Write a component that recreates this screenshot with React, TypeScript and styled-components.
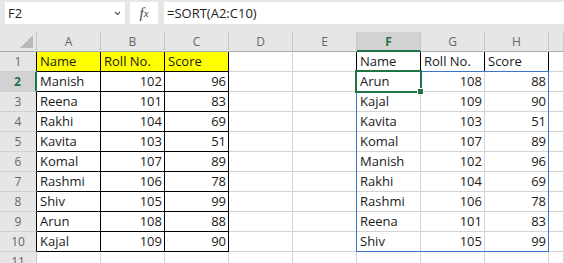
import React from "react";
import styled, { createGlobalStyle } from "styled-components";

const Global = createGlobalStyle`
  html, body { margin: 0; padding: 0; background: #ffffff; overflow: hidden; }
  body { font-family: "Open Sans", "Liberation Sans", sans-serif; }
`;

const GREEN = "#217346";
const BLUE = "#3b74c9";
const GRID = "#d4d4d4";
const HEAD_BG = "#e6e6e6";

const Page = styled.div`
  width: 564px;
  height: 263px;
  overflow: hidden;
  background: #fff;
`;

const Toolbar = styled.div`
  display: flex;
  align-items: flex-start;
  gap: 5px;
  height: 32px;
  box-sizing: border-box;
  padding: 2px 0 0 5px;
  background: ${HEAD_BG};
`;

const NameBox = styled.div`
  width: 120px;
  height: 22px;
  background: #fff;
  display: flex;
  align-items: center;
  justify-content: space-between;
  box-sizing: border-box;
  padding: 0 4px 0 3px;
  font-size: 13px;
  color: #222;
`;

const FxBox = styled.div`
  width: 28px;
  height: 22px;
  background: #fff;
  display: flex;
  align-items: center;
  justify-content: center;
  font-family: "Liberation Serif", "DejaVu Serif", serif;
  font-style: italic;
  color: #444;
  font-size: 15px;
  line-height: 1;
  & > small { font-size: 11px; margin-left: 0px; }
`;

const FormulaInput = styled.div`
  flex: 1;
  margin-left: 1px;
  height: 22px;
  background: #fff;
  display: flex;
  align-items: center;
  box-sizing: border-box;
  padding-left: 3px;
  font-size: 13px;
  color: #222;
`;

const Sheet = styled.div`
  position: relative;
  display: grid;
  grid-template-columns: 37px repeat(8, 64px) 1fr;
  grid-template-rows: 20px;
  grid-auto-rows: 20px;
`;

const Corner = styled.div`
  position: relative;
  background: ${HEAD_BG};
  box-sizing: border-box;
  border-right: 1px solid #c6c6c6;
  border-bottom: 1px solid #ababab;
  &::after {
    content: "";
    position: absolute;
    right: 3px;
    bottom: 3px;
    width: 0;
    height: 0;
    border-left: 13px solid transparent;
    border-bottom: 13px solid #b9b9b9;
  }
`;

const ColHead = styled.div<{ $sel?: boolean }>`
  background: ${(p) => (p.$sel ? "#d2d2d2" : HEAD_BG)};
  box-sizing: border-box;
  border-right: 1px solid #c6c6c6;
  border-bottom: ${(p) => (p.$sel ? `2px solid ${GREEN}` : "1px solid #ababab")};
  display: flex;
  align-items: center;
  justify-content: center;
  font-size: 12px;
  color: ${(p) => (p.$sel ? GREEN : "#666")};
  font-weight: ${(p) => (p.$sel ? 700 : 400)};
  padding-top: ${(p) => (p.$sel ? "1px" : "0")};
`;

const RowHead = styled.div<{ $sel?: boolean; $edge?: boolean }>`
  background: ${(p) => (p.$sel ? "#d2d2d2" : HEAD_BG)};
  box-sizing: border-box;
  border-right: ${(p) =>
    p.$sel ? `2px solid ${GREEN}` : `1px solid ${p.$edge ? "#000" : "#c6c6c6"}`};
  border-bottom: 1px solid #d0d0d0;
  display: flex;
  align-items: center;
  justify-content: center;
  font-size: 12px;
  color: ${(p) => (p.$sel ? GREEN : "#666")};
  font-weight: ${(p) => (p.$sel ? 700 : 400)};
`;

const Cell = styled.div<{
  $num?: boolean;
  $fill?: boolean;
  $edgeRight?: boolean;
  $edgeBottom?: boolean;
}>`
  box-sizing: border-box;
  background: ${(p) => (p.$fill ? "#ffff00" : "#fff")};
  border-right: 1px solid ${(p) => (p.$edgeRight ? "#000" : GRID)};
  border-bottom: 1px solid ${(p) => (p.$edgeBottom ? "#000" : GRID)};
  display: flex;
  align-items: flex-end;
  justify-content: ${(p) => (p.$num ? "flex-end" : "flex-start")};
  padding: 0 2px 1px 3px;
  font-size: 13px;
  line-height: 17px;
  color: #1a1a1a;
  white-space: nowrap;
  overflow: hidden;
`;

const SpillBorder = styled.div`
  position: absolute;
  left: 356px;
  top: 39px;
  width: 193px;
  height: 181px;
  box-sizing: border-box;
  border: 1px solid ${BLUE};
  pointer-events: none;
`;

const Selection = styled.div`
  position: absolute;
  left: 355px;
  top: 38px;
  width: 67px;
  height: 23px;
  box-sizing: border-box;
  border: 2px solid ${GREEN};
  pointer-events: none;
`;

const FillHandle = styled.div`
  position: absolute;
  left: 417px;
  top: 56px;
  width: 7px;
  height: 7px;
  box-sizing: border-box;
  background: ${GREEN};
  border: 1px solid #fff;
`;

type V = string | number | null;

const left: V[][] = [
  ["Name", "Roll No.", "Score"],
  ["Manish", 102, 96],
  ["Reena", 101, 83],
  ["Rakhi", 104, 69],
  ["Kavita", 103, 51],
  ["Komal", 107, 89],
  ["Rashmi", 106, 78],
  ["Shiv", 105, 99],
  ["Arun", 108, 88],
  ["Kajal", 109, 90],
];

const right: V[][] = [
  ["Name", "Roll No.", "Score"],
  ["Arun", 108, 88],
  ["Kajal", 109, 90],
  ["Kavita", 103, 51],
  ["Komal", 107, 89],
  ["Manish", 102, 96],
  ["Rakhi", 104, 69],
  ["Rashmi", 106, 78],
  ["Reena", 101, 83],
  ["Shiv", 105, 99],
];

const cols = ["A", "B", "C", "D", "E", "F", "G", "H", ""];

const Chevron = () => (
  <svg width="7" height="5" viewBox="0 0 7 5">
    <path d="M1 1 L3.5 3.5 L6 1" fill="none" stroke="#555" strokeWidth="1.1" />
  </svg>
);

export default function App() {
  const rows = Array.from({ length: 11 }, (_, i) => i + 1);
  return (
    <Page>
      <Global />
      <Toolbar>
        <NameBox>
          <span>F2</span>
          <Chevron />
        </NameBox>
        <FxBox>
          f<small>x</small>
        </FxBox>
        <FormulaInput>=SORT(A2:C10)</FormulaInput>
      </Toolbar>
      <Sheet>
        <Corner />
        {cols.map((c, i) => (
          <ColHead key={i} $sel={c === "F"}>
            {c}
          </ColHead>
        ))}
        {rows.map((r) => {
          const inTable = r <= 10;
          const lrow = inTable ? left[r - 1] : null;
          const rrow = inTable ? right[r - 1] : null;
          return (
            <React.Fragment key={r}>
              <RowHead $sel={r === 2} $edge={inTable}>
                {r}
              </RowHead>
              {[0, 1, 2].map((c) => {
                const v = lrow ? lrow[c] : null;
                return (
                  <Cell
                    key={`l${c}`}
                    $num={typeof v === "number"}
                    $fill={r === 1}
                    $edgeRight={inTable}
                    $edgeBottom={inTable}
                  >
                    {v}
                  </Cell>
                );
              })}
              <Cell />
              <Cell $edgeRight={r === 1} />
              {[0, 1, 2].map((c) => {
                const v = rrow ? rrow[c] : null;
                return (
                  <Cell
                    key={`r${c}`}
                    $num={typeof v === "number"}
                    $edgeRight={r === 1}
                    $edgeBottom={r === 1}
                  >
                    {v}
                  </Cell>
                );
              })}
              <Cell />
            </React.Fragment>
          );
        })}
        <SpillBorder />
        <Selection>
        </Selection>
        <FillHandle />
      </Sheet>
    </Page>
  );
}
